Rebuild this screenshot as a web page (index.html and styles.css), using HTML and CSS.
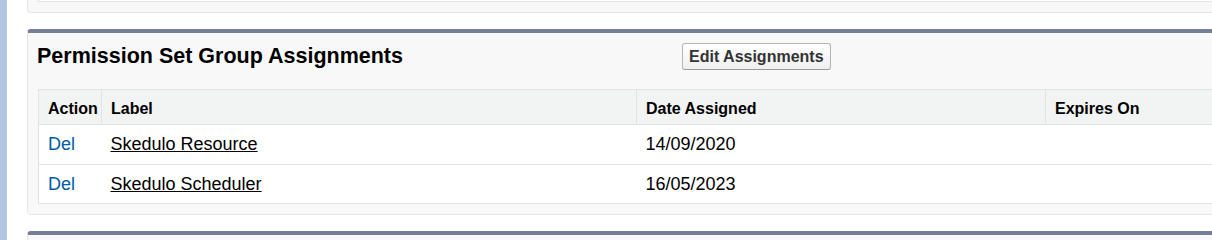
FILE: index.html
```html
<!DOCTYPE html>
<html lang="en">
<head>
  <meta charset="UTF-8" />
  <title>Permission Set Group Assignments</title>
  <link rel="stylesheet" href="styles.css">
</head>
<body>
  <div class="page">
    <div class="sidebar-edge"></div>
    <div class="main">
      <div class="block block-prev">
        <div class="prev-list"></div>
      </div>

      <div class="block">
        <div class="block-header">
          <h3>Permission Set Group Assignments</h3>
          <div class="buttons">
            <button class="btn">Edit Assignments</button>
          </div>
        </div>
        <table class="list">
          <thead>
            <tr>
              <th class="col-action">Action</th>
              <th class="col-label">Label</th>
              <th class="col-date">Date Assigned</th>
              <th>Expires On</th>
            </tr>
          </thead>
          <tbody>
            <tr>
              <td><a class="action-link" href="#">Del</a></td>
              <td><a class="label-link" href="#">Skedulo Resource</a></td>
              <td>14/09/2020</td>
              <td></td>
            </tr>
            <tr>
              <td><a class="action-link" href="#">Del</a></td>
              <td><a class="label-link" href="#">Skedulo Scheduler</a></td>
              <td>16/05/2023</td>
              <td></td>
            </tr>
          </tbody>
        </table>
      </div>

      <div class="block block-next"></div>
    </div>
  </div>
</body>
</html>
```

FILE: styles.css
```css
html, body {
  margin: 0;
  height: 100%;
}
body {
  font-family: "Liberation Sans", Arial, sans-serif;
  background: #fff;
  color: #000;
  overflow: hidden;
}
.page {
  display: flex;
  height: 240px;
  overflow: hidden;
}
.sidebar-edge {
  width: 7px;
  flex: none;
  background: #b1c5e2;
}
.main {
  margin-left: 20px;
  flex: none;
  width: 1250px;
}
.block {
  background: #f8f8f8;
  border: 1px solid #e4e6e8;
  border-top: 4px solid #747e96;
  border-radius: 4px;
  padding: 0 0 10px 0;
  margin-bottom: 16px;
}
.block-prev {
  margin-top: -32px;
}
.prev-list {
  height: 30px;
  margin-left: 10px;
  background: #fff;
  border: 1px solid #e0e3e5;
  border-right: none;
  box-sizing: border-box;
}
.block-next {
  height: 40px;
}
.block-header {
  display: grid;
  grid-template-columns: 645px auto;
  align-items: center;
  height: 56px;
  padding: 10px 0 0 9px;
  box-sizing: border-box;
  align-content: start;
}
.block-header h3 {
  margin: 0;
  font-size: 21.5px;
  line-height: 27px;
  font-weight: bold;
}
.btn {
  font-family: "Liberation Sans", Arial, sans-serif;
  font-size: 16px;
  font-weight: bold;
  color: #333;
  height: 27px;
  padding: 0 6px;
  border: 1px solid #b5b5b5;
  border-bottom-color: #9a9a9a;
  border-radius: 3px;
  background: linear-gradient(#ffffff, #efefef);
  cursor: pointer;
}
table.list {
  margin-left: 10px;
  width: 1228px;
  border-collapse: collapse;
  table-layout: fixed;
  background: #fff;
  border: 1px solid #e0e3e5;
}
.list th, .list td {
  box-sizing: border-box;
  border: 1px solid #e0e3e5;
  text-align: left;
  padding: 0 0 0 9px;
}
.list th {
  background: #f2f3f3;
  font-size: 16px;
  font-weight: bold;
  height: 35px;
  padding-top: 3px;
}
.list td {
  font-size: 18px;
  height: 39.5px;
  padding-top: 1px;
  border-left: none;
  border-right: none;
}
.col-action { width: 63px; }
.col-label { width: 535px; }
.col-date { width: 409px; }
.action-link {
  color: #015ba7;
  text-decoration: none;
}
.label-link {
  color: #000;
  text-decoration: underline;
}
```
